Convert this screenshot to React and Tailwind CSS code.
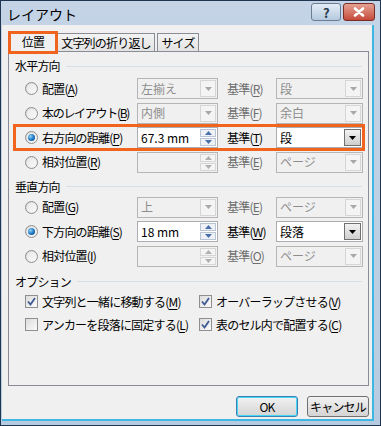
import React from "react";

const jp = "font-['Noto_Sans_CJK_JP','Noto_Sans_CJK_SC',sans-serif]";

const Key = ({ label, k, tight }) => (
  <span className={`whitespace-nowrap ${tight ? "tracking-[-1.3px]" : ""}`}>
    {label}(<span className="underline underline-offset-2">{k}</span>)
  </span>
);

const Radio = ({ on }) => (
  <div className="w-[13px] h-[13px] rounded-full border border-[#8e8f8f] bg-gradient-to-br from-[#d6d6d6] to-[#fbfbfb] flex items-center justify-center shrink-0">
    <div className="w-[9px] h-[9px] rounded-full bg-gradient-to-br from-[#e9e9e9] to-[#f8f8f8] flex items-center justify-center">
      {on && <div className="w-[7px] h-[7px] rounded-full bg-[radial-gradient(circle_at_35%_35%,#8fd2f6,#1a73c0_55%,#0b3f7a)]" />}
    </div>
  </div>
);

const Check = ({ on }) => (
  <div className="w-[13px] h-[13px] border border-[#8e8f8f] bg-gradient-to-br from-[#dcdcdc] to-[#fbfbfb] flex items-center justify-center shrink-0">
    {on && (
      <svg width="11" height="11" viewBox="0 0 11 11">
        <path d="M2 5.5 L4.5 8.5 L9 2" fill="none" stroke="#3d5a95" strokeWidth="1.8" />
      </svg>
    )}
  </div>
);

const Arrow = ({ color, up }) => (
  <svg width="7" height="4" viewBox="0 0 7 4">
    <path d={up ? "M0 4 L3.5 0 L7 4 Z" : "M0 0 L7 0 L3.5 4 Z"} fill={color} />
  </svg>
);

// dropdown or spin box
const Field = ({ value, w, enabled, spin }) => (
  <div
    className={`h-[21px] ${w} border flex items-stretch shrink-0 ${
      enabled ? "border-[#abadb3] bg-white text-black" : "border-[#b5b5b5] bg-[#f0f0f0] text-[#8d8d8d]"
    }`}
  >
    <div className="flex-1 flex items-center pl-[3px] whitespace-pre tracking-normal">{value}</div>
    {spin ? (
      <div className="w-[16px] flex flex-col my-[1px] mr-[1px] gap-px">
        <div className={`flex-1 flex items-center justify-center border ${enabled ? "border-[#b9c4d4] bg-[#eef2f7]" : "border-[#d6d6d6] bg-[#f4f4f4]"}`}>
          <Arrow up color={enabled ? "#4a6ea8" : "#b0b0b0"} />
        </div>
        <div className={`flex-1 flex items-center justify-center border ${enabled ? "border-[#b9c4d4] bg-[#eef2f7]" : "border-[#d6d6d6] bg-[#f4f4f4]"}`}>
          <Arrow color={enabled ? "#4a6ea8" : "#b0b0b0"} />
        </div>
      </div>
    ) : enabled ? (
      <div className="w-[17px] m-[1px] border border-[#707070] bg-gradient-to-b from-[#f2f2f2] to-[#cfcfcf] flex items-center justify-center">
        <Arrow color="#000" />
      </div>
    ) : (
      <div className="w-[16px] m-[1px] border border-[#d6d6d6] bg-[#f4f4f4] flex items-center justify-center">
        <Arrow color="#a8a8a8" />
      </div>
    )}
  </div>
);

const Row = ({ on, label, k, tight, v1, e1, spin, bk, v2, e2, hl }) => (
  <div className="relative h-[21px] flex items-center pl-[16px]">
    {hl && <div className="absolute left-[4px] right-[3px] -top-[3px] -bottom-[3px] border-[3px] border-[#f0641e] pointer-events-none" />}
    <div className="w-[112px] flex items-center gap-[4px]">
      <Radio on={on} />
      <Key label={label} k={k} tight={tight} />
    </div>
    <Field value={v1} w="w-[81px]" enabled={e1} spin={spin} />
    <div className={`w-[49px] ml-[9px] ${e2 ? "text-black" : "text-[#6d6d6d]"}`}>
      <Key label="基準" k={bk} />
    </div>
    <Field value={v2} w="w-[87px]" enabled={e2} />
  </div>
);

const Section = ({ title }) => (
  <div className="flex items-center h-[14px] pl-[6px] pr-[6px]">
    <span>{title}</span>
    <div className="flex-1 h-px bg-[#d5dfe5] ml-[6px]" />
  </div>
);

export default function App() {
  return (
    <div className={`w-[381px] h-[426px] bg-[#1f3550] p-px ${jp} text-[12px] leading-[14px] tracking-[-0.8px] text-black`}>
      <div className="w-full h-full bg-gradient-to-b from-[#c4d4e6] to-[#b7cbe0] flex flex-col">
        {/* title bar */}
        <div className="h-[24px] flex items-start pr-[5px]">
          <div className="pl-[6px] pt-[5px] text-[14px] leading-[16px] tracking-normal">レイアウト</div>
          <div className="ml-auto flex gap-[2px] mt-[2px]">
            <div className="w-[30px] h-[18px] rounded-[3px] border border-[#6b7d92] bg-gradient-to-b from-[#e4edf7] to-[#b5c9de] flex items-center justify-center text-[13px] font-bold text-[#2b3a4d] leading-none">
              ?
            </div>
            <div className="w-[32px] h-[18px] rounded-[3px] border border-[#7a2d26] bg-gradient-to-b from-[#e5a193] to-[#c4493a] flex items-center justify-center">
              <svg width="12" height="10" viewBox="0 0 12 10">
                <path d="M2 1.5 L10 8.5 M10 1.5 L2 8.5" stroke="#fff" strokeWidth="2.6" strokeLinecap="round" />
              </svg>
            </div>
          </div>
        </div>

        {/* body */}
        <div className="flex-1 flex pb-[4px] pl-px pr-[6px]">
          <div className="flex-1 bg-[#f0f0f0] flex flex-col pl-[6px] pr-[3px] pt-[6px] border-r-[2px] border-b-[2px] border-[#3fb7e4]">
            {/* tabs */}
            <div className="flex items-end h-[20px] relative z-10">
              <div className="relative w-[50px] h-[21px] -mb-px bg-[#f0f0f0] border border-b-0 border-[#898c95] flex items-center justify-center">
                <div className="absolute -left-px -right-px -top-px -bottom-[2px] border-[3px] border-[#f0641e]" />
                <span>位置</span>
              </div>
              <div className="w-[97px] h-[18px] border border-b-0 border-l-0 border-[#898c95] bg-gradient-to-b from-[#f3f3f3] to-[#e3e3e3] flex items-center justify-center whitespace-nowrap">
                文字列の折り返し
              </div>
              <div className="w-[42px] h-[18px] ml-[2px] border border-b-0 border-[#898c95] bg-gradient-to-b from-[#f3f3f3] to-[#e3e3e3] flex items-center justify-center">
                サイズ
              </div>
            </div>

            {/* panel */}
            <div className="h-[335px] border border-[#898c95] bg-[#f0f0f0] flex flex-col pt-[7px]">
              <Section title="水平方向" />
              <div className="flex flex-col gap-[3.5px] mt-[5px]">
                <Row label="配置" k="A" v1="左揃え" bk="R" v2="段" />
                <Row label="本のレイアウト" k="B" tight v1="内側" bk="F" v2="余白" />
                <Row on hl label="右方向の距離" k="P" v1="67.3 mm" e1 spin bk="T" v2="段" e2 />
                <Row label="相対位置" k="R" v1="" spin bk="E" v2="ページ" />
              </div>

              <div className="mt-[7px]">
                <Section title="垂直方向" />
              </div>
              <div className="flex flex-col gap-[3.5px] mt-[3px]">
                <Row label="配置" k="G" v1="上" bk="E" v2="ページ" />
                <Row on label="下方向の距離" k="S" v1="18 mm" e1 spin bk="W" v2="段落" e2 />
                <Row label="相対位置" k="I" v1="" spin bk="O" v2="ページ" />
              </div>

              <div className="mt-[8px]">
                <Section title="オプション" />
              </div>
              <div className="grid grid-cols-[174px_1fr] gap-y-[7px] pl-[16px] mt-[5px]">
                <div className="flex items-center gap-[4px] h-[16px]">
                  <Check on />
                  <Key label="文字列と一緒に移動する" k="M" />
                </div>
                <div className="flex items-center gap-[4px] h-[16px]">
                  <Check on />
                  <Key label="オーバーラップさせる" k="V" />
                </div>
                <div className="flex items-center gap-[4px] h-[16px]">
                  <Check />
                  <Key label="アンカーを段落に固定する" k="L" />
                </div>
                <div className="flex items-center gap-[4px] h-[16px]">
                  <Check on />
                  <Key label="表のセル内で配置する" k="C" />
                </div>
              </div>
            </div>

            {/* buttons */}
            <div className="flex justify-end gap-[9px] mt-[10px]">
              <div className="w-[62px] h-[21px] rounded-[3px] border border-[#3c7fb1] shadow-[inset_0_0_0_1px_#48d6f8] bg-gradient-to-b from-[#f2f2f2] to-[#d4d4d4] flex items-center justify-center">
                OK
              </div>
              <div className="w-[62px] h-[21px] rounded-[3px] border border-[#707070] bg-gradient-to-b from-[#f2f2f2] to-[#d4d4d4] flex items-center justify-center whitespace-nowrap">
                キャンセル
              </div>
            </div>
          </div>
        </div>
      </div>
    </div>
  );
}
